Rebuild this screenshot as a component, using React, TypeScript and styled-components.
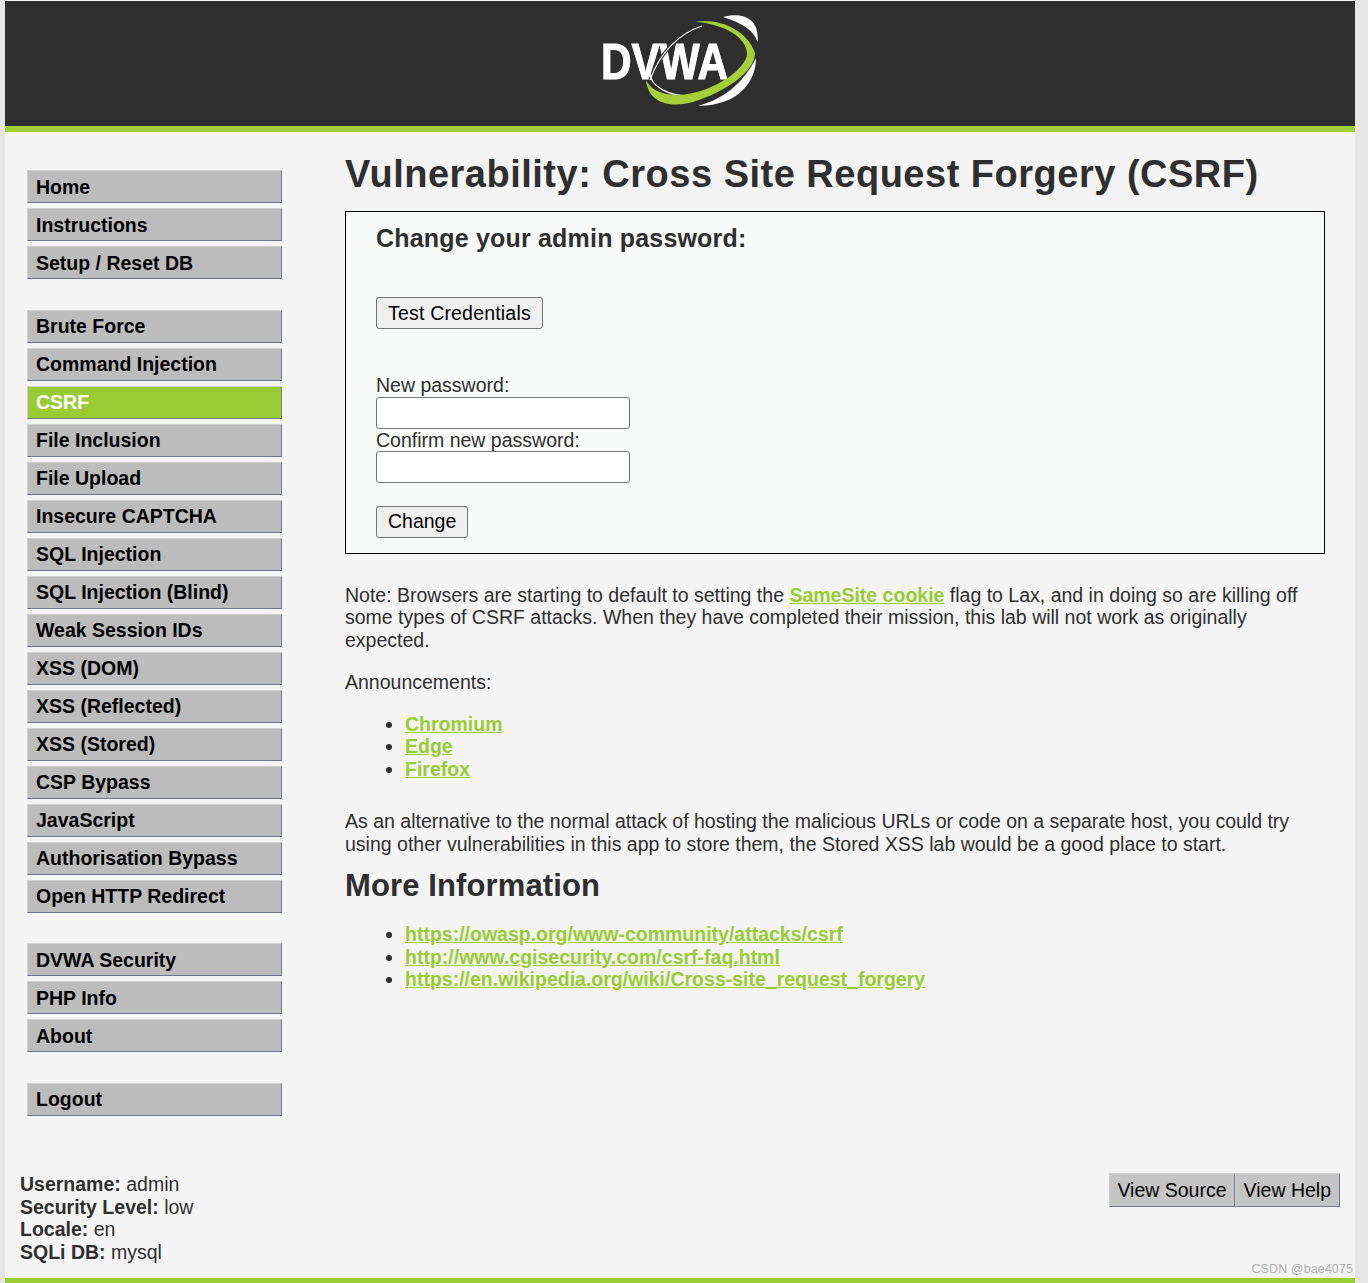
import React from "react";
import styled, { createGlobalStyle } from "styled-components";

/* Global ------------------------------------------------------------------- */
const GlobalStyle = createGlobalStyle`
    html, body {
        margin: 0;
        padding: 0;
        background: #e5e5e5;
        color: #2f2f2f;
        font-family: "Liberation Sans", Arial, sans-serif;
        font-size: 19.5px;
        line-height: 22.5px;
    }
`

/* Component Styling -------------------------------------------------------- */
const Container = styled.div`
    position: relative;
    margin: 0 13px 0 5px;
    height: 1283px;
    display: flex;
    flex-direction: column;
    background: #f4f4f4;
    box-sizing: border-box;
    padding-top: 1px;
`

const Header = styled.div`
    flex: none;
    height: 125px;
    background: #2f2f2f;
    border-bottom: 6px solid #a6ce39;
    display: flex;
    justify-content: center;
    align-items: flex-start;
`

const Logo = styled.svg`
    display: block;
    width: 170px;
    height: 100px;
    margin-top: 9px;
    filter: blur(0.35px);
`

const Main = styled.div`
    flex: 1;
    display: flex;
    min-height: 0;
`

const Sidebar = styled.div`
    flex: none;
    width: 255px;
    margin-left: 22px;
    padding-top: 38px;
`

const MenuGroup = styled.ul`
    list-style: none;
    margin: 0 0 30.5px;
    padding: 0;
`

const MenuItem = styled.li<{ $active?: boolean }>`
    box-sizing: border-box;
    height: 33px;
    margin-bottom: 5px;
    padding: 0.75px 0 0 8px;
    line-height: 30px;
    font-weight: bold;
    color: ${props => props.$active ? '#ffffff' : '#000000'};
    background: ${props => props.$active ? '#99cc33' : '#bcbcbc'};
    border-top: 1px solid #d0d0d0;
    border-right: 1px solid #77808f;
    border-bottom: 1px solid #6d7688;
    border-left: 1px solid #d0d0d0;
`

const Content = styled.div`
    flex: 1;
    margin-left: 63px;
    margin-right: 30px;
    padding-top: 20px;
`

const Title = styled.h1`
    margin: 0;
    font-size: 38px;
    line-height: 44px;
    font-weight: bold;
    letter-spacing: 0.5px;
    color: #2f2f2f;
`

const FormBox = styled.div`
    box-sizing: border-box;
    margin-top: 15px;
    height: 343px;
    padding: 12px 30px 0;
    background: #f8f9f9;
    border: 1px solid #000000;
`

const FormTitle = styled.h3`
    margin: 0 0 45px;
    font-size: 25px;
    line-height: 28px;
    font-weight: bold;
    letter-spacing: 0.19px;
`

const Button = styled.button<{ $tracking?: number; $lift?: number }>`
    box-sizing: border-box;
    display: block;
    height: 32px;
    padding: 0 11px ${props => props.$lift ?? 0}px;
    font-family: inherit;
    font-size: 19.5px;
    letter-spacing: ${props => props.$tracking ?? 0}px;
    color: #000000;
    background: #efefef;
    border: 1px solid #767676;
    border-radius: 3px;
`

const FormFields = styled.div`
    margin-top: 45px;
`

const FieldLabel = styled.div`
    height: 22px;
    line-height: 22px;

    &:first-child {
        height: 23px;
    }
`

const TextInput = styled.input`
    box-sizing: border-box;
    display: block;
    width: 254px;
    height: 32px;
    padding: 0;
    background: #ffffff;
    border: 1px solid #767676;
    border-radius: 3px;
`

const SubmitRow = styled.div`
    margin-top: 23px;
`

const Paragraph = styled.p<{ $top: number }>`
    margin: ${props => props.$top}px 0 0;
`

const Link = styled.a`
    color: #99cc33;
    font-weight: bold;
    text-decoration: underline;
`

const LinkList = styled.ul<{ $top: number }>`
    margin: ${props => props.$top}px 0 0;
    padding-left: 60px;
`

const SectionTitle = styled.h2`
    margin: 13px 0 0;
    font-size: 31px;
    line-height: 36px;
    font-weight: bold;
    letter-spacing: 0.12px;
`

const Footer = styled.div`
    flex: none;
    height: 105px;
    display: flex;
    justify-content: space-between;
    align-items: flex-start;
    padding: 0 15px;
    border-bottom: 5px solid #99cc33;
`

const UserInfo = styled.div`
    padding-top: 0;
`

const Info = styled.div`
    height: 22.6px;
`

const ActionButtons = styled.div`
    display: flex;
`

const ActionButton = styled.div`
    box-sizing: border-box;
    height: 34px;
    padding: 0 8px;
    line-height: 33px;
    color: #000000;
    background: #c4c4c4;
    border-top: 1px solid #d0d0d0;
    border-right: 1px solid #6d7688;
    border-bottom: 1px solid #6d7688;
    border-left: 1px solid #d0d0d0;

    &:first-child {
        padding: 0 7px;
    }
`

const Watermark = styled.div`
    position: absolute;
    right: 2px;
    bottom: 7px;
    font-size: 12.5px;
    line-height: 14px;
    letter-spacing: 0.1px;
    color: #b0b0b0;
`

/* Data --------------------------------------------------------------------- */
const menuGroups: string[][] = [
    ["Home", "Instructions", "Setup / Reset DB"],
    [
        "Brute Force", "Command Injection", "CSRF", "File Inclusion", "File Upload",
        "Insecure CAPTCHA", "SQL Injection", "SQL Injection (Blind)", "Weak Session IDs",
        "XSS (DOM)", "XSS (Reflected)", "XSS (Stored)", "CSP Bypass", "JavaScript",
        "Authorisation Bypass", "Open HTTP Redirect",
    ],
    ["DVWA Security", "PHP Info", "About"],
    ["Logout"],
]

const infoRows = [
    { label: "Username:", value: "admin" },
    { label: "Security Level:", value: "low" },
    { label: "Locale:", value: "en" },
    { label: "SQLi DB:", value: "mysql" },
]

/* Component ---------------------------------------------------------------- */
// viewBox is in page pixels so the swooshes can be read straight off the screenshot
function DvwaLogo() {
    return (
        <Logo viewBox="595 10 170 100">
            <text x="601" y="78.5" fontFamily="'Liberation Sans', Arial, sans-serif" fontWeight="bold" fontSize="50" fill="#ffffff" stroke="#ffffff" strokeWidth="1" textLength="127" lengthAdjust="spacingAndGlyphs">DVWA</text>
            <path d="M702 26 C680 33 660 52 650 80" fill="none" stroke="#2f2f2f" strokeWidth="3.5" />
            <path d="M702 26 C680 33 660 52 650 80" fill="none" stroke="#ffffff" strokeWidth="1.2" />
            <path d="M650 73 C650 86 668 96 690 96" fill="none" stroke="#ffffff" strokeWidth="1.2" />
            <path d="M695 21.7 C720 18 747 30 755 53 C755 72 725 92 693 102 C672 108 648 104 646 80 C650 90 667 99 693 93 C720 87 745 68 747 55 C748 38 725 24 695 21.7 Z" fill="#a6ce39" />
            <path d="M723 17 C742 12 760 18 757.5 42 C754 30 742 23 723 17 Z" fill="#ffffff" />
            <path d="M756 58 C756 82 738 106 698 105.7 C722 100 743 84 756 58 Z" fill="#ffffff" />
        </Logo>
    )
}

export default function App() {
    return (
        <>
            <GlobalStyle />
            <Container>
                <Header>
                    <DvwaLogo />
                </Header>
                <Main>
                    <Sidebar>
                        {menuGroups.map(group => (
                            <MenuGroup key={group[0]}>
                                {group.map(item => (
                                    <MenuItem key={item} $active={item === "CSRF"}>{item}</MenuItem>
                                ))}
                            </MenuGroup>
                        ))}
                    </Sidebar>
                    <Content>
                        <Title>Vulnerability: Cross Site Request Forgery (CSRF)</Title>
                        <FormBox>
                            <FormTitle>Change your admin password:</FormTitle>
                            <Button $tracking={0.19}>Test Credentials</Button>
                            <FormFields>
                                <FieldLabel>New password:</FieldLabel>
                                <TextInput type="text" />
                                <FieldLabel>Confirm new password:</FieldLabel>
                                <TextInput type="text" />
                            </FormFields>
                            <SubmitRow>
                                <Button $lift={2}>Change</Button>
                            </SubmitRow>
                        </FormBox>
                        <Paragraph $top={29.9}>
                            Note: Browsers are starting to default to setting the <Link href="#">SameSite cookie</Link> flag to Lax, and in doing so are killing off some types of CSRF attacks. When they have completed their mission, this lab will not work as originally expected.
                        </Paragraph>
                        <Paragraph $top={19.5}>Announcements:</Paragraph>
                        <LinkList $top={19.5}>
                            <li><Link href="#">Chromium</Link></li>
                            <li><Link href="#">Edge</Link></li>
                            <li><Link href="#">Firefox</Link></li>
                        </LinkList>
                        <Paragraph $top={29.7}>
                            As an alternative to the normal attack of hosting the malicious URLs or code on a separate host, you could try using other vulnerabilities in this app to store them, the Stored XSS lab would be a good place to start.
                        </Paragraph>
                        <SectionTitle>More Information</SectionTitle>
                        <LinkList $top={19}>
                            <li><Link href="#">https://owasp.org/www-community/attacks/csrf</Link></li>
                            <li><Link href="#">http://www.cgisecurity.com/csrf-faq.html</Link></li>
                            <li><Link href="#">https://en.wikipedia.org/wiki/Cross-site_request_forgery</Link></li>
                        </LinkList>
                    </Content>
                </Main>
                <Footer>
                    <UserInfo>
                        {infoRows.map(row => (
                            <Info key={row.label}><b>{row.label}</b> {row.value}</Info>
                        ))}
                    </UserInfo>
                    <ActionButtons>
                        <ActionButton>View Source</ActionButton>
                        <ActionButton>View Help</ActionButton>
                    </ActionButtons>
                </Footer>
                <Watermark>CSDN @bae4075</Watermark>
            </Container>
        </>
    )
}
